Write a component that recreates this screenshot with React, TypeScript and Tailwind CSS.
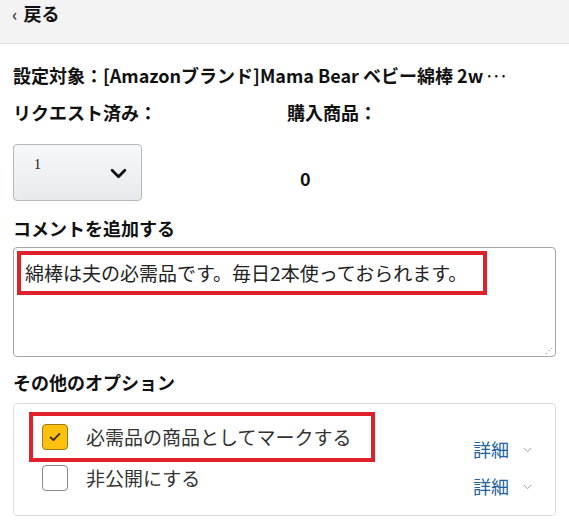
import React from 'react';

const font = { fontFamily: '"Noto Sans CJK JP", "Noto Sans", sans-serif' };

const Chevron: React.FC<{ className?: string; strokeWidth?: number }> = ({ className, strokeWidth = 2 }) => (
  <svg viewBox="0 0 16 10" className={className} fill="none" stroke="currentColor" strokeWidth={strokeWidth} strokeLinecap="round" strokeLinejoin="round">
    <path d="M2 2l6 6 6-6" />
  </svg>
);

const OptionRow: React.FC<{ checked?: boolean; label: string }> = ({ checked, label }) => (
  <div className="flex items-center h-[40px]">
    <div
      className={`w-[26px] h-[26px] rounded-[4px] border flex items-center justify-center ${
        checked ? 'bg-[#fcc10f] border-[#9b7a18]' : 'bg-white border-[#888c8c]'
      }`}
    >
      {checked && (
        <svg viewBox="0 0 16 16" className="w-[14px] h-[14px]" fill="none" stroke="#3b2f10" strokeWidth={2.2} strokeLinecap="round" strokeLinejoin="round">
          <path d="M3 8.5l3.2 3L13 4.5" />
        </svg>
      )}
    </div>
    <span className="ml-[18px] text-[19px] text-[#333]">{label}</span>
  </div>
);

const App: React.FC = () => {
  return (
    <div className="w-[569px] h-[524px] bg-white overflow-hidden text-[#111]" style={font}>
      {/* ヘッダー */}
      <div className="h-[44px] bg-[#f3f3f3] border-b border-[#e2e2e2] flex items-center px-[12px] pb-[17px]">
        <span className="text-[17px] font-bold text-[#444] mr-[6px] leading-none">‹</span>
        <span className="text-[18px] font-bold leading-none">戻る</span>
      </div>

      <div className="px-[13px]">
        <div className="mt-[19px] text-[18px] font-bold leading-[24px] whitespace-nowrap">
          設定対象：[Amazonブランド]Mama Bear ベビー綿棒 2w<span className="tracking-[-3px] ml-[1px] font-normal">···</span>
        </div>

        <div className="mt-[13px] flex text-[18px] font-bold leading-[24px]">
          <div className="w-[274px]">リクエスト済み：</div>
          <div>購入商品：</div>
        </div>

        <div className="mt-[20px] flex items-center">
          <div className="w-[274px]">
            <div className="w-[129px] h-[57px] rounded-[4px] border border-[#b5b8bd] bg-gradient-to-b from-[#f7f8fa] to-[#e8eaed] flex items-start justify-between pl-[20px] pr-[14px] pt-[9px]">
              <span className="text-[14px] text-[#111]" style={{ fontFamily: '"Liberation Serif", serif' }}>1</span>
              <Chevron className="w-[17px] h-[11px] mt-[14px] text-[#111]" strokeWidth={2.6} />
            </div>
          </div>
          <div className="text-[18px] font-bold ml-[13px] mt-[12px]">0</div>
        </div>

        <div className="mt-[15px] text-[18px] font-bold leading-[24px]">コメントを追加する</div>

        <div className="mt-[7px] h-[110px] rounded-[4px] border border-[#a6a6a6] relative p-[3px]">
          <div className="inline-flex items-center h-[44px] border-[4px] border-[#e0202a] pl-[4px] pr-[16px]">
            <span className="text-[19px] text-[#222]">綿棒は夫の必需品です。毎日2本使っておられます。</span>
          </div>
          <div className="absolute right-[2px] bottom-[2px] text-[8px] leading-none text-[#777]">⋰</div>
        </div>

        <div className="mt-[13px] text-[18px] font-bold leading-[24px]">その他のオプション</div>

        <div className="mt-[9px] h-[113px] rounded-[4px] border border-[#dedede] flex pl-[15px] pr-[23px] pt-[8px]">
          <div className="flex-1">
            <div className="w-[346px] h-[50px] border-[4px] border-[#e0202a] flex items-center pl-[9px]">
              <OptionRow checked label="必需品の商品としてマークする" />
            </div>
            <div className="pl-[13px] -mt-[4px]">
              <OptionRow label="非公開にする" />
            </div>
          </div>
          <div className="flex flex-col pt-[24px] gap-[10px]">
            <div className="flex items-center gap-[14px]">
              <span className="text-[18px] text-[#2162a1]">詳細</span>
              <Chevron className="w-[9px] h-[6px] text-[#999]" strokeWidth={1.6} />
            </div>
            <div className="flex items-center gap-[14px]">
              <span className="text-[18px] text-[#2162a1]">詳細</span>
              <Chevron className="w-[9px] h-[6px] text-[#999]" strokeWidth={1.6} />
            </div>
          </div>
        </div>
      </div>
    </div>
  );
};

export default App;
